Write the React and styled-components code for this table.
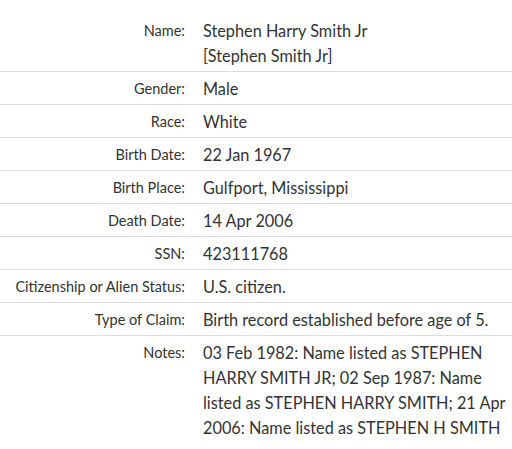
import React from 'react';
import styled, { createGlobalStyle } from 'styled-components';

const GlobalStyle = createGlobalStyle`
  html, body {
    margin: 0;
    padding: 0;
    background: #fff;
  }
  body {
    font-family: Lato, "Open Sans", sans-serif;
    color: #333;
  }
`;

const Table = styled.div`
  width: 512px;
  padding-top: 14px;
`;

const Row = styled.div`
  display: grid;
  grid-template-columns: 188px 1fr;
  padding: 4px 0 3px;
  border-bottom: ${p => (p.$last ? 'none' : '1px solid #ddd')};
`;

const Label = styled.div`
  font-size: 14.5px;
  line-height: 25px;
  text-align: right;
  padding-right: 3px;
  color: #333;
`;

const Value = styled.div`
  font-size: 16.3px;
  line-height: 25px;
  padding-left: 15px;
  color: #333;
`;

const rows = [
  ['Name:', <>Stephen Harry Smith Jr<br />[Stephen Smith Jr]</>],
  ['Gender:', 'Male'],
  ['Race:', 'White'],
  ['Birth Date:', '22 Jan 1967'],
  ['Birth Place:', 'Gulfport, Mississippi'],
  ['Death Date:', '14 Apr 2006'],
  ['SSN:', '423111768'],
  ['Citizenship or Alien Status:', 'U.S. citizen.'],
  ['Type of Claim:', 'Birth record established before age of 5.'],
  ['Notes:', '03 Feb 1982: Name listed as STEPHEN HARRY SMITH JR; 02 Sep 1987: Name listed as STEPHEN HARRY SMITH; 21 Apr 2006: Name listed as STEPHEN H SMITH'],
];

export default function App() {
  return (
    <>
      <GlobalStyle />
      <Table>
        {rows.map(([label, value], i) => (
          <Row key={label} $last={i === rows.length - 1}>
            <Label>{label}</Label>
            <Value>{value}</Value>
          </Row>
        ))}
      </Table>
    </>
  );
}
